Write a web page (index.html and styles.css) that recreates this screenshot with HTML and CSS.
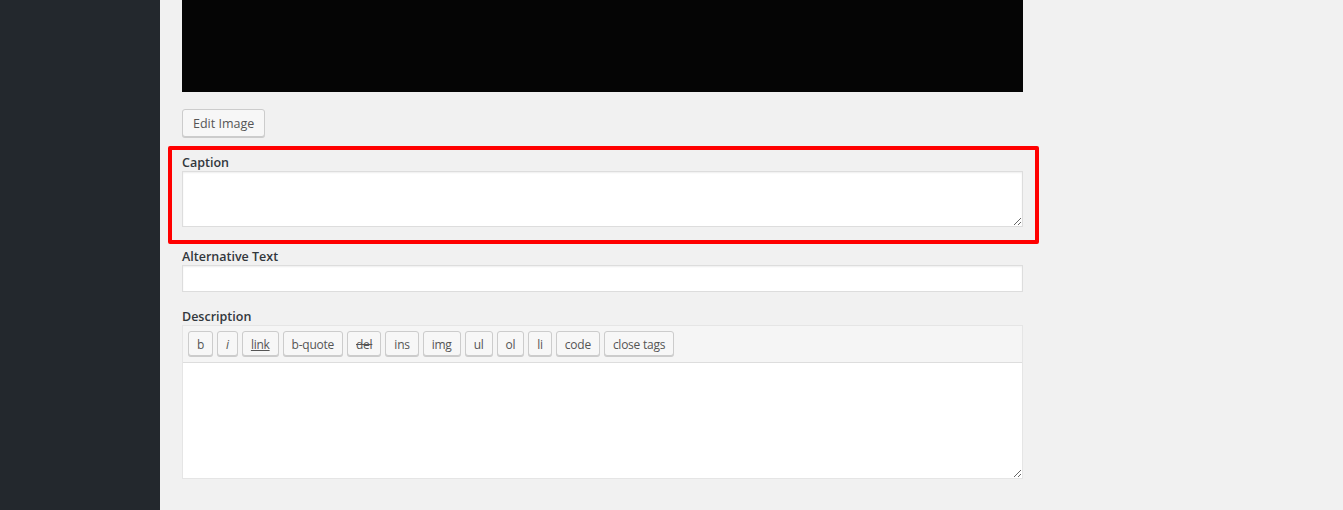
FILE: index.html
```html
<!DOCTYPE html>
<html>
<head>
    <meta charset="utf-8">
    <link rel="stylesheet" href="styles.css">
</head>
<body>
    <div class="wrap">
        <div class="adminmenu"></div>
        <div class="content">
            <div class="attachment-image"></div>
            <button class="button">Edit Image</button>

            <div class="field field-marked">
                <label class="field-label" for="caption">Caption</label>
                <textarea class="field-textarea caption-text" id="caption"></textarea>
            </div>

            <div class="field">
                <label class="field-label" for="alt">Alternative Text</label>
                <input class="field-input" type="text" id="alt">
            </div>

            <div class="field field-desc">
                <label class="field-label" for="content">Description</label>
                <div class="editor">
                    <div class="quicktags">
                        <span class="qt-btn">b</span>
                        <span class="qt-btn qt-em">i</span>
                        <span class="qt-btn qt-link">link</span>
                        <span class="qt-btn">b-quote</span>
                        <span class="qt-btn qt-del">del</span>
                        <span class="qt-btn">ins</span>
                        <span class="qt-btn">img</span>
                        <span class="qt-btn">ul</span>
                        <span class="qt-btn">ol</span>
                        <span class="qt-btn">li</span>
                        <span class="qt-btn">code</span>
                        <span class="qt-btn">close tags</span>
                    </div>
                    <textarea class="editor-area" id="content"></textarea>
                </div>
            </div>
        </div>
    </div>
</body>
</html>
```

FILE: styles.css
```css
* {
    margin: 0;
    padding: 0;
    box-sizing: border-box;
}

body {
    background: #f1f1f1;
    font-family: "Open Sans", "Noto Sans", sans-serif;
    font-size: 13px;
    color: #23282d;
    overflow: hidden;
}

.wrap {
    display: flex;
    height: 510px;
}

.adminmenu {
    width: 160px;
    flex: none;
    background: #23282d;
}

.content {
    width: 863px;
    padding-left: 22px;
    display: flex;
    flex-direction: column;
    align-items: flex-start;
}

.attachment-image {
    width: 841px;
    height: 92px;
    background: #050505;
}

.button {
    margin-top: 17px;
    height: 28px;
    padding: 1px 10px 0;
    font-family: inherit;
    font-size: 12.5px;
    line-height: 25px;
    color: #555;
    background: #f7f7f7;
    border: 1px solid #ccc;
    border-radius: 3px;
    box-shadow: 0 1px 0 #ccc;
}

.field {
    width: 841px;
    display: flex;
    flex-direction: column;
}

.field-label {
    height: 18px;
    padding-top: 1px;
    font-weight: 600;
    font-size: 12.5px;
    line-height: 17px;
    color: #32373c;
}

/* red outline around the caption field */
.field-marked {
    width: 871px;
    margin: 9px 0 0 -14px;
    padding: 3px 12px 13px 10px;
    border: 4px solid #ff0000;
    border-radius: 2px;
}

.field-textarea,
.field-input,
.editor-area {
    width: 100%;
    font-family: inherit;
    font-size: 13px;
    background: #fff;
    border: 1px solid #ddd;
    box-shadow: inset 0 1px 2px rgba(0, 0, 0, 0.07);
    outline: none;
}

.caption-text {
    height: 56px;
    resize: vertical;
}

.field + .field {
    margin-top: 3px;
}

.field-input {
    height: 27px;
}

.field.field-desc {
    margin-top: 15px;
}

.editor {
    border: 1px solid #e5e5e5;
    background: #f5f5f5;
}

.quicktags {
    display: flex;
    gap: 4px;
    padding: 5px 5px 6px;
    border-bottom: 1px solid #ddd;
}

.qt-btn {
    height: 25px;
    padding: 2px 8px 0;
    font-size: 12px;
    letter-spacing: -0.25px;
    line-height: 21px;
    color: #555;
    background: #f7f7f7;
    border: 1px solid #ccc;
    border-radius: 3px;
    box-shadow: 0 1px 0 #ccc;
}

.qt-em {
    font-style: italic;
}

.qt-link {
    text-decoration: underline;
}

.qt-del {
    text-decoration: line-through;
}

.editor-area {
    display: block;
    height: 115px;
    border: none;
    box-shadow: none;
    resize: vertical;
}
```
